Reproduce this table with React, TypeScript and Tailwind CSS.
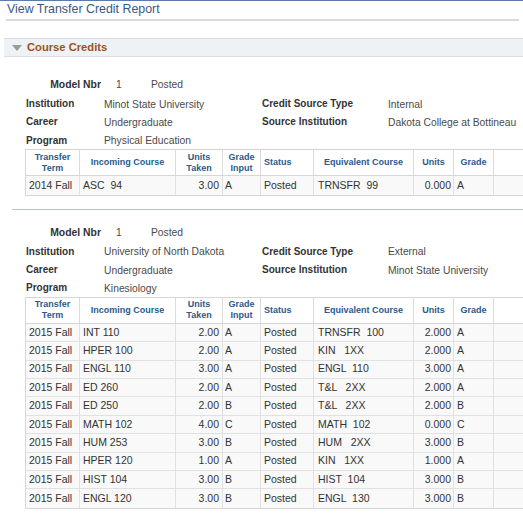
import React from "react"

type Row = [string, string, string, string, string, string, string, string]

type Section = {
  institution: string
  career: string
  program: string
  sourceType: string
  sourceInst: string
  rows: Row[]
}

const sections: Section[] = [
  {
    institution: "Minot State University",
    career: "Undergraduate",
    program: "Physical Education",
    sourceType: "Internal",
    sourceInst: "Dakota College at Bottineau",
    rows: [["2014 Fall", "ASC  94", "3.00", "A", "Posted", "TRNSFR  99", "0.000", "A"]],
  },
  {
    institution: "University of North Dakota",
    career: "Undergraduate",
    program: "Kinesiology",
    sourceType: "External",
    sourceInst: "Minot State University",
    rows: [
      ["2015 Fall", "INT 110", "2.00", "A", "Posted", "TRNSFR  100", "2.000", "A"],
      ["2015 Fall", "HPER 100", "2.00", "A", "Posted", "KIN   1XX", "2.000", "A"],
      ["2015 Fall", "ENGL 110", "3.00", "A", "Posted", "ENGL  110", "3.000", "A"],
      ["2015 Fall", "ED 260", "2.00", "A", "Posted", "T&L   2XX", "2.000", "A"],
      ["2015 Fall", "ED 250", "2.00", "B", "Posted", "T&L   2XX", "2.000", "B"],
      ["2015 Fall", "MATH 102", "4.00", "C", "Posted", "MATH  102", "0.000", "C"],
      ["2015 Fall", "HUM 253", "3.00", "B", "Posted", "HUM   2XX", "3.000", "B"],
      ["2015 Fall", "HPER 120", "1.00", "A", "Posted", "KIN   1XX", "1.000", "A"],
      ["2015 Fall", "HIST 104", "3.00", "B", "Posted", "HIST  104", "3.000", "B"],
      ["2015 Fall", "ENGL 120", "3.00", "B", "Posted", "ENGL  130", "3.000", "B"],
    ],
  },
]

// widths and alignment for the data cells, in column order
const cellCls = [
  "w-[54px] pl-[3px]",
  "w-[96px] pl-[3px]",
  "w-[47px] pr-[3px] text-right",
  "w-[38px] pl-[2px]",
  "w-[53px] pl-[3px]",
  "w-[100px] pl-[4px]",
  "w-[40px] pr-[2px] text-right",
  "w-[40px] pl-[3px]",
]

function InfoBlock({ s }: { s: Section }) {
  const label = "w-[78px] font-bold text-[#333] text-[10px]"
  const label2 = "w-[126px] font-bold text-[#333] text-[10px]"
  const value = "w-[158px] text-[#4a4a4a] text-[10.3px] pt-[2px]"
  const value2 = "text-[#4a4a4a] text-[10.3px] pt-[2px]"
  return (
    <div className="pl-[26px]">
      <div className="flex h-[18.3px] items-center">
        <span className="w-[75px] text-right font-bold text-[#333] text-[10.4px]">Model Nbr</span>
        <span className="ml-[15px] w-[35px] text-[10.3px] text-[#4a4a4a]">1</span>
        <span className="text-[10.3px] text-[#4a4a4a]">Posted</span>
      </div>
      <div className="flex h-[18.3px] items-center">
        <span className={label}>Institution</span>
        <span className={value}>{s.institution}</span>
        <span className={label2}>Credit Source Type</span>
        <span className={value2}>{s.sourceType}</span>
      </div>
      <div className="flex h-[18.3px] items-center">
        <span className={label}>Career</span>
        <span className={value}>{s.career}</span>
        <span className={label2}>Source Institution</span>
        <span className={value2}>{s.sourceInst}</span>
      </div>
      <div className="flex h-[18.3px] items-center">
        <span className={label}>Program</span>
        <span className={value}>{s.program}</span>
      </div>
    </div>
  )
}

function CreditTable({ rows }: { rows: Row[] }) {
  const head = "flex items-center border-r border-[#dcdcdc] font-bold text-[9px] leading-[11px] text-[#2b5a8c]"
  return (
    <div className="ml-[25px] w-[520px] border border-[#d6d6d6] border-r-0">
      <div className="flex h-[26px] bg-white border-b border-[#d6d6d6]">
        <div className={head + " w-[54px] justify-center text-center"}>Transfer<br />Term</div>
        <div className={head + " w-[96px] justify-center"}>Incoming Course</div>
        <div className={head + " w-[47px] justify-center text-center"}>Units<br />Taken</div>
        <div className={head + " w-[38px] justify-center text-center"}>Grade<br />Input</div>
        <div className={head + " w-[53px] pl-[3px]"}>Status</div>
        <div className={head + " w-[100px] justify-center"}>Equivalent Course</div>
        <div className={head + " w-[40px] justify-center"}>Units</div>
        <div className={head + " w-[40px] justify-center"}>Grade</div>
        <div className={head + " w-[40px]"}></div>
      </div>
      {rows.map((r, i) => (
        <div key={i} className="flex h-[18.4px] bg-[#f9f9f9] border-b border-[#e1e1e1] last:border-b-0">
          {r.map((c, j) => (
            <div
              key={j}
              className={cellCls[j] + " flex items-center border-r border-[#e1e1e1] whitespace-pre text-[10.5px] text-[#333]" + (j === 2 || j === 6 ? " justify-end" : "")}
            >
              {c}
            </div>
          ))}
          <div className="w-[40px] border-r border-[#e1e1e1]"></div>
        </div>
      ))}
    </div>
  )
}

export default function App() {
  return (
    <div className="w-[523px] h-[516px] overflow-hidden bg-white border-t border-[#5d7ba8] font-['Liberation_Sans',Arial,sans-serif]">
      <div className="h-[18px] pl-[7px] text-[12.4px] leading-[17px] text-[#3a5788]">View Transfer Credit Report</div>
      <div className="ml-[6px] w-[513px] h-[2px] bg-[#d9d9d9]"></div>

      <div className="mt-[17px] ml-[4px] h-[19px] flex items-center bg-[#eef2f4] border-y border-[#d8dee3]">
        <svg width="10" height="6" viewBox="0 0 10 6" className="ml-[8px]">
          <path d="M0 0 L10 0 L5 6 Z" fill="#9a9a9a" />
        </svg>
        <span className="ml-[5px] font-bold text-[11.2px] text-[#a0501a]">Course Credits</span>
      </div>

      <div className="mt-[19px]">
        <InfoBlock s={sections[0]} />
        <CreditTable rows={sections[0].rows} />
      </div>

      <div className="mt-[13px] ml-[12px] h-[1px] bg-[#b9c3d3]"></div>

      <div className="mt-[14px]">
        <InfoBlock s={sections[1]} />
        <CreditTable rows={sections[1].rows} />
      </div>
    </div>
  )
}
